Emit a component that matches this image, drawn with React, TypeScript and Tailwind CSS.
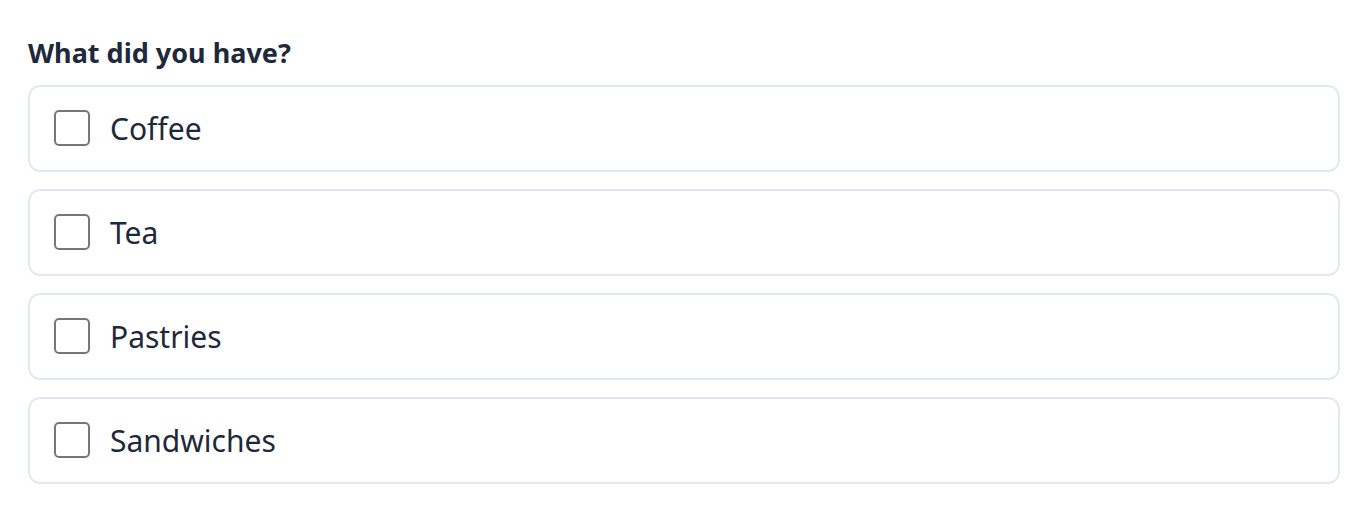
import React from "react";

const items = ["Coffee", "Tea", "Pastries", "Sandwiches"];

export default function App() {
  return (
    <div
      className="bg-white px-[28px] pt-[36px] pb-[26px] text-[#1e293b]"
      style={{ fontFamily: '"Noto Sans", "Open Sans", sans-serif' }}
    >
      <div className="text-[27px] font-bold leading-[34px] mb-[15px]">What did you have?</div>
      <div className="flex flex-col gap-[17px]">
        {items.map((it) => (
          <label
            key={it}
            className="flex items-center gap-[20px] rounded-[12px] border-2 border-[#e2e8f0] pl-[24px] pr-[23px] pt-[23px] pb-[24px]"
          >
            <span className="w-[36px] h-[36px] rounded-[5px] border-2 border-[#767676] bg-white shrink-0" />
            <span className="text-[30px] leading-[34px] pt-[2px]">{it}</span>
          </label>
        ))}
      </div>
    </div>
  );
}
